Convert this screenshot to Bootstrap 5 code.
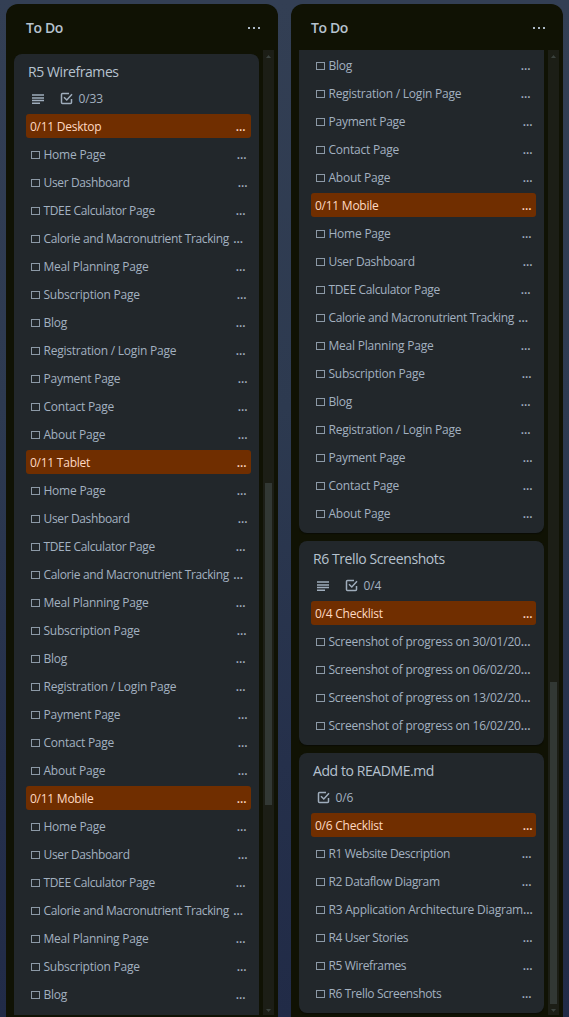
<!DOCTYPE html>
<html lang="en">
<head>
<meta charset="utf-8">
<meta name="viewport" content="width=device-width, initial-scale=1">
<title>To Do</title>
<link href="https://cdn.jsdelivr.net/npm/bootstrap@5.3.0/dist/css/bootstrap.min.css" rel="stylesheet">
<style>
html,body{height:100%}
body{font-family:"Open Sans","Noto Sans",sans-serif;font-size:12px;line-height:26px;color:#a3b1c0;background:linear-gradient(#333f54 0,#2d3a50 40%,#25304b 75%,#212b47 100%);overflow:hidden}
.board{height:1017px;padding:4px 6px 0;gap:13px}
.lane{width:272px;height:1013px;background:#101204;border-radius:12px 12px 0 0}
.lane-head{height:46px;padding:2px 17px 0 20px}
.lane-head h2{font-size:14px;font-weight:600;color:#b6c2cf;letter-spacing:-.4px;line-height:20px}
.scroller{height:965px;padding-left:8px;gap:4px}
.cards{width:245px;gap:8px;overflow:hidden}
.tile{background:#22272b;border-radius:8px;padding:8px 8px 6px 12px;box-shadow:0 1px 1px #0a0c05;flex:none}
.tile.open-end{flex:1 0 auto;border-radius:8px 8px 0 0;padding-bottom:0}
.tile.cut{border-radius:0 0 8px 8px;padding-top:1px}
.tile h3{font-size:14px;line-height:20px;height:20px;color:#b6c2cf;margin:0 0 0 2px;letter-spacing:-.42px;font-weight:400}
.meta{height:30px;padding:3px 0 0 6px;gap:16px;font-size:12px;letter-spacing:-.1px}
.meta .count{padding-left:1.5px}
.group{height:24px;margin:2px 0;padding:0 4px;line-height:25px;border-radius:3px;background:#702e00;color:#ffd9c2;font-weight:500;letter-spacing:-.25px}
.todo{height:28px;padding-left:5px;padding-top:2px;letter-spacing:-.23px;white-space:nowrap}
.todo>i{width:9px;height:8px;border:1px solid #8c99a6;margin-right:3.5px;flex:none}
.tight{letter-spacing:-.36px}
.dots{margin-left:auto;letter-spacing:0;font-weight:600}
.p3{padding-right:3.5px}.p4{padding-right:4.5px}.p5{padding-right:5.5px}.p8{padding-right:8px}.p6{padding-right:7px}
.track{width:11px;background:#1c1e16;padding:5px 2px 3px}
.thumb{background:#323834;width:7px;height:322px}
</style>
</head>
<body>
<svg class="d-none">
<symbol id="more" viewBox="0 0 14 4"><path d="M1 1h2v2H1zM6 1h2v2H6zM11 1h2v2h-2z" fill="#aab7c4"/></symbol>
<symbol id="desc" viewBox="0 0 12 10"><path d="M0 1h12M0 4h12M0 6.5h12M0 9.2h8" stroke="#9fadbc" stroke-width="1.4"/></symbol>
<symbol id="check" viewBox="0 0 13 13"><path d="M9 1.5H2.5q-1 0-1 1v8q0 1 1 1h8q1 0 1-1V7M4 5.2l2.8 2.8L12 2.2" fill="none" stroke="#9fadbc" stroke-width="1.5"/></symbol>
<symbol id="up" viewBox="0 0 5 3"><path d="M0 3 2.5 0 5 3z" fill="#3b423e"/></symbol>
<symbol id="down" viewBox="0 0 5 3"><path d="M0 0h5L2.5 3z" fill="#3b423e"/></symbol>
</svg>
<main class="board d-flex justify-content-between" id="board"></main>
<script>
const pages = [['Home Page','p4'],['User Dashboard','p3','tight'],['TDEE Calculator Page','p5','tight'],['Calorie and Macronutrient Tracking','p8','tight'],['Meal Planning Page','p5'],['Subscription Page','p4'],['Blog','p5'],['Registration / Login Page','p5'],['Payment Page','p3'],['Contact Page','p3'],['About Page','p3']];
const group = (t, pad) => `<div class="group d-flex ${pad}"><span>${t}</span><span class="dots">...</span></div>`;
const todo = ([t, pad, fit = '']) => `<div class="todo d-flex align-items-center ${pad}"><i></i><span class="${fit}">${t}</span><span class="dots">...</span></div>`;
const shots = ['30/01/20','06/02/20','13/02/20','16/02/20'].map(d => ['Screenshot of progress on ' + d,'p6']);
const readme = [['R1 Website Description','p4','tight'],['R2 Dataflow Diagram','p4','tight'],['R3 Application Architecture Diagram','p4'],['R4 User Stories','p3','tight'],['R5 Wireframes','p3','tight'],['R6 Trello Screenshots','p4','tight']];
const tile = (title, count, desc, body, extra = '') => `<article class="tile ${extra}"><h3>${title}</h3><div class="meta d-flex align-items-center">${desc ? '<svg width="12" height="10"><use href="#desc"/></svg>' : ''}<span class="d-flex align-items-center"><svg width="13" height="13" class="me-1"><use href="#check"/></svg><span class="count">${count}</span></span></div>${body}</article>`;
const lane = (cards, top, lead) => `<section class="lane"><header class="lane-head d-flex align-items-center justify-content-between"><h2 class="m-0">To Do</h2><svg width="14" height="4"><use href="#more"/></svg></header><div class="scroller d-flex"><div class="cards d-flex flex-column ${lead}">${cards}</div><div class="track d-flex flex-column align-items-center justify-content-between"><svg width="5" height="3"><use href="#up"/></svg><div class="flex-grow-1 d-flex"><div class="thumb" style="margin-top:${top}px"></div></div><svg width="5" height="3"><use href="#down"/></svg></div></div></section>`;
const all = pages.map(todo).join('');
document.getElementById('board').innerHTML =
  lane(tile('R5 Wireframes','0/33',true, group('0/11 Desktop','p5')+all+group('0/11 Tablet','p4')+all+group('0/11 Mobile','p4')+pages.slice(0,7).map(todo).join(''),'open-end'), 425, 'pt-1') +
  lane('<article class="tile cut">'+pages.slice(6).map(todo).join('')+group('0/11 Mobile','p4')+all+'</article>'+
    tile('R6 Trello Screenshots','0/4',true, group('0/4 Checklist','p3')+shots.map(todo).join(''))+
    tile('Add to README.md','0/6',false, group('0/6 Checklist','p3')+readme.map(todo).join('')), 624, '');
</script>
<script src="https://cdn.jsdelivr.net/npm/bootstrap@5.3.0/dist/js/bootstrap.bundle.min.js"></script>
</body>
</html>
